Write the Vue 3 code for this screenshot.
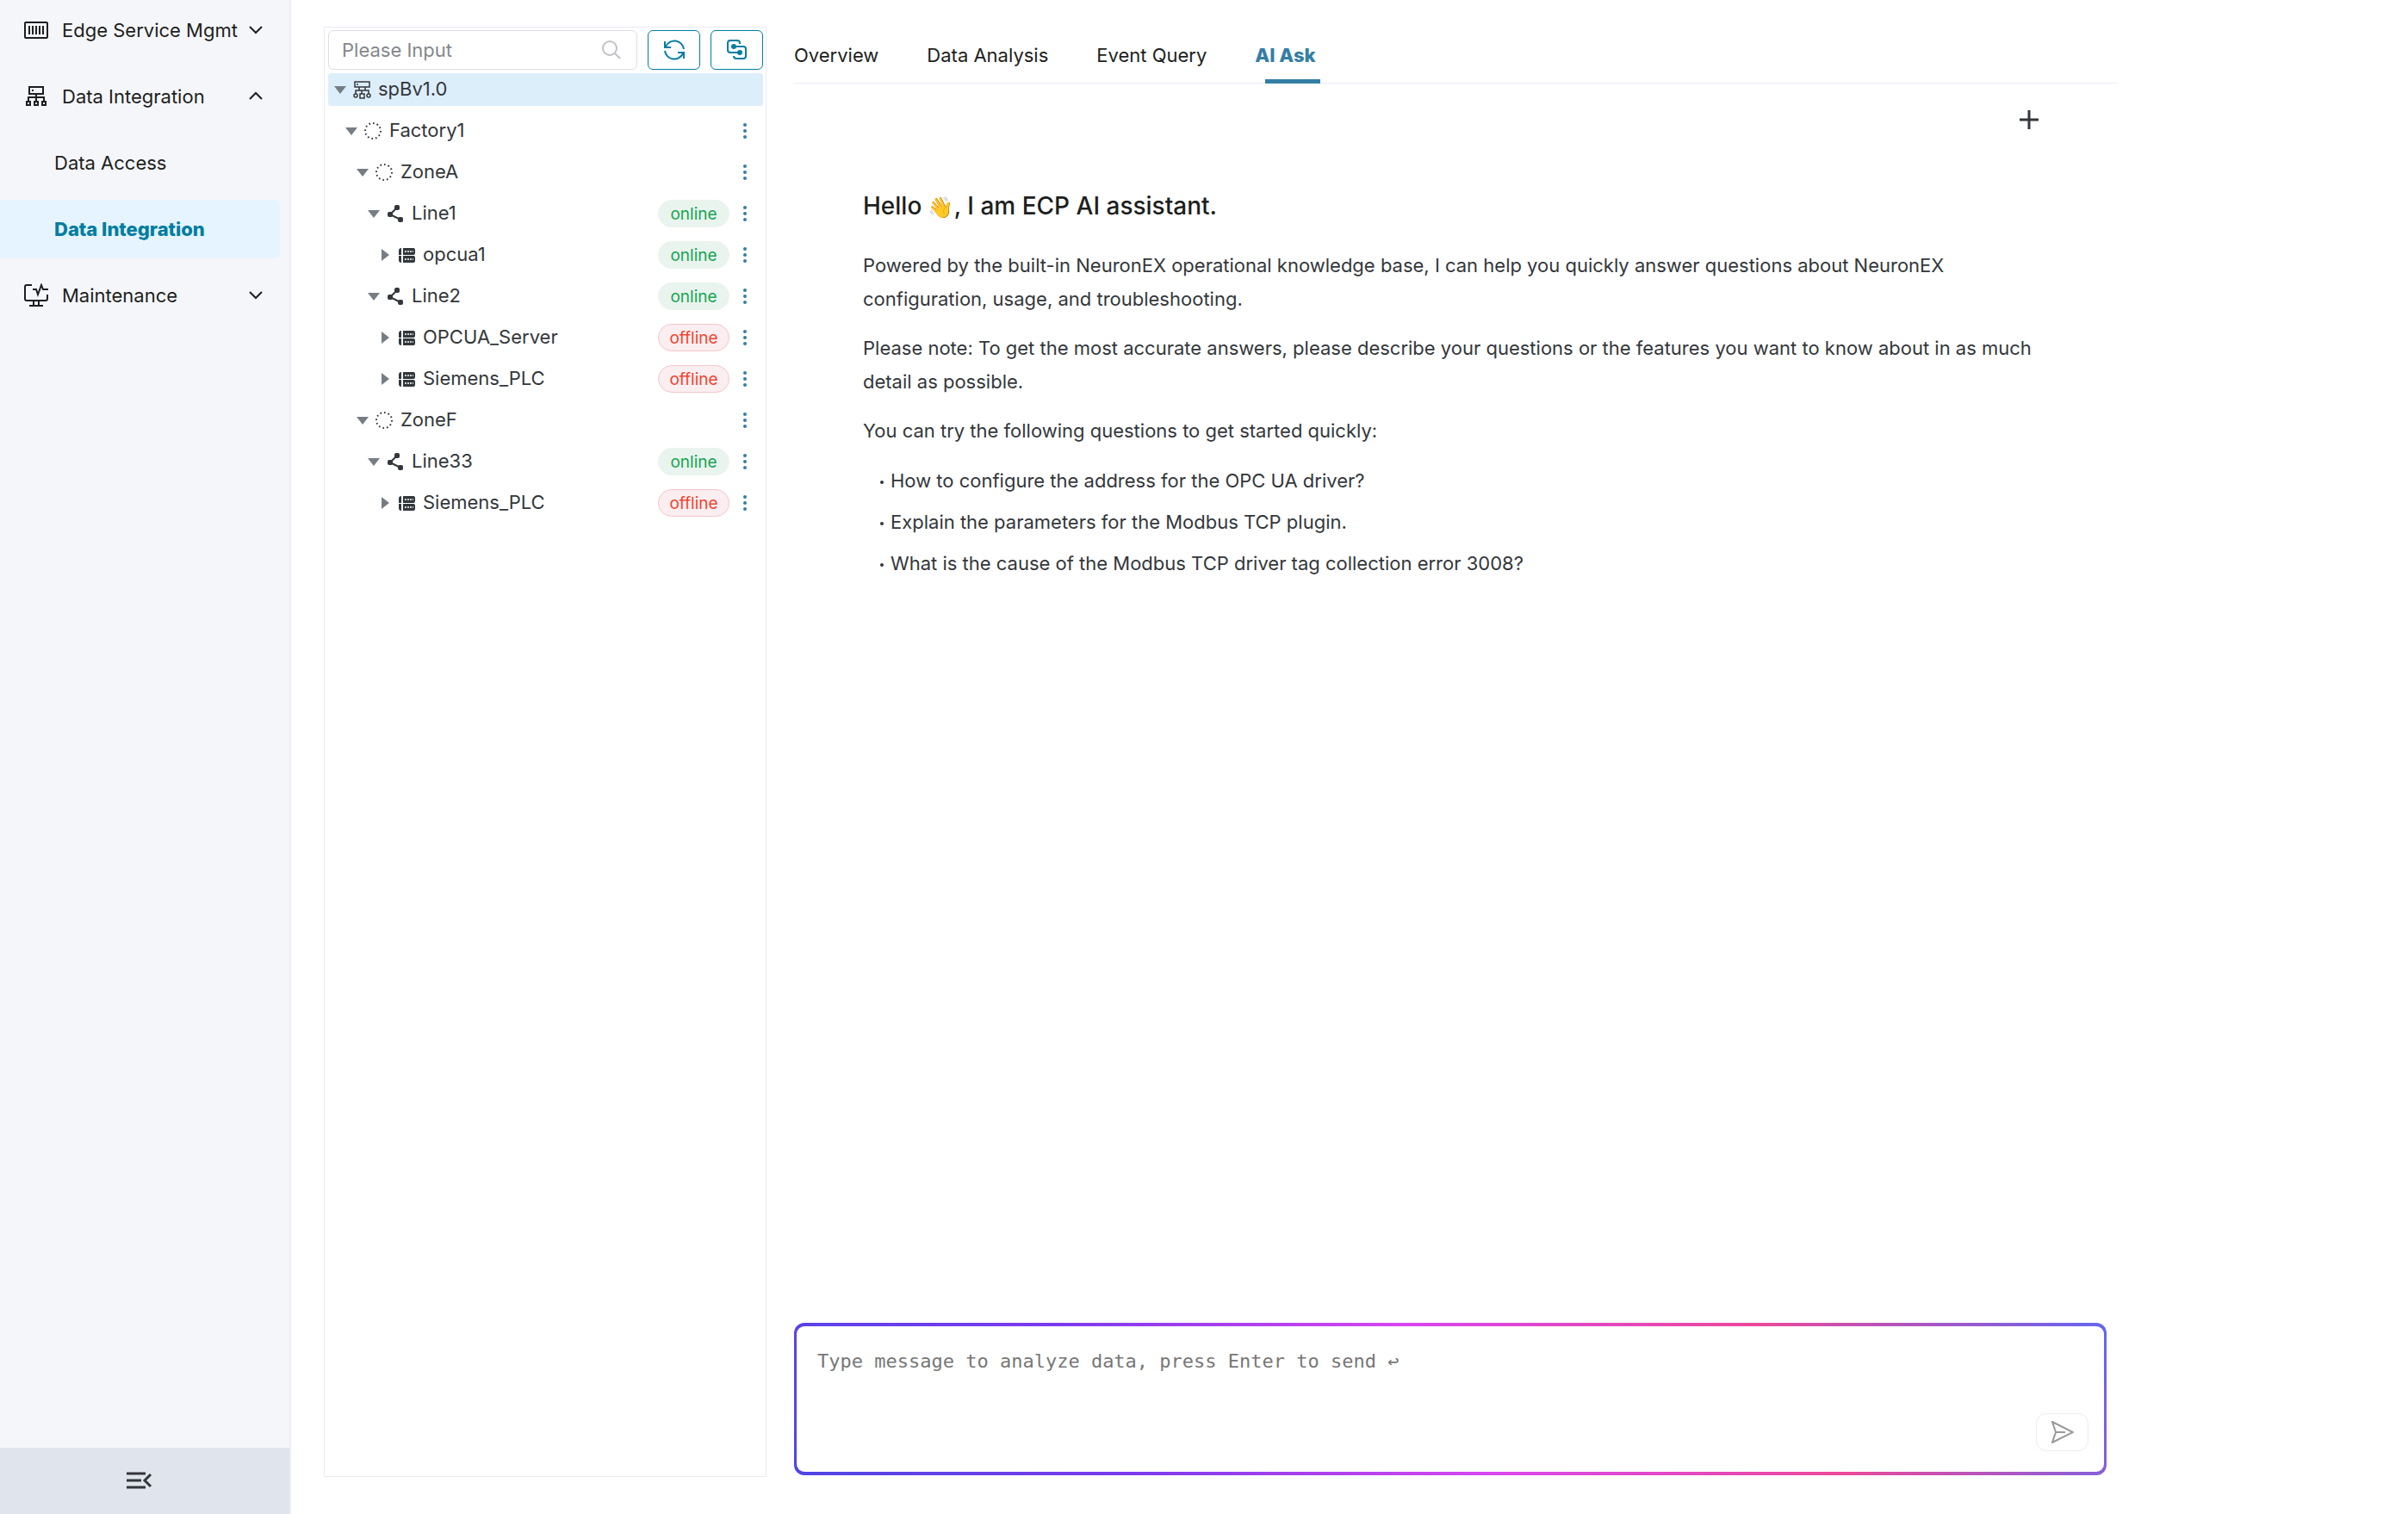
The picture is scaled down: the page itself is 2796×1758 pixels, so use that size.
<template>
  <div class="layout">
    <aside class="sidebar">
      <nav class="menu">
        <button class="menu-item" type="button">
          <svg class="menu-icon" viewBox="0 0 28 28">
            <rect x="1" y="5" width="26" height="18" rx="1" />
            <path d="M6 9v10M10 9v10M14 9v10M18 9v10M22 9v10" />
          </svg>
          <span class="menu-text">Edge Service Mgmt</span>
          <svg class="chevron" viewBox="0 0 18 18"><path d="M2 5l7 7 7-7" /></svg>
        </button>
        <button class="menu-item" type="button">
          <svg class="menu-icon" viewBox="0 0 28 28">
            <path d="M6 3h16v8H6zM14 11v8M5 19v-4h18v4" />
            <path d="M3 20h4v4H3zM12 20h4v4h-4zM21 20h4v4h-4z" />
            <path d="M10 6v2" />
          </svg>
          <span class="menu-text">Data Integration</span>
          <svg class="chevron" viewBox="0 0 18 18"><path d="M2 12l7-7 7 7" /></svg>
        </button>
        <a class="menu-item sub" href="#">Data Access</a>
        <a class="menu-item sub active" href="#">Data Integration</a>
        <button class="menu-item" type="button">
          <svg class="menu-icon" viewBox="0 0 28 28">
            <path d="M9 2H3Q1 2 1 4v14q0 2 2 2h22q2 0 2-2v-5" />
            <path d="M10 7h4l2 6 4-11 2 5h6M11 20v5M17 20v5M6 26h16" />
          </svg>
          <span class="menu-text">Maintenance</span>
          <svg class="chevron" viewBox="0 0 18 18"><path d="M2 5l7 7 7-7" /></svg>
        </button>
      </nav>
      <button class="fold" type="button" aria-label="Fold menu">
        <svg viewBox="0 0 30 24">
          <path d="M0 4h22M0 12h17M0 20h22M28 5l-7 7 7 7" />
        </svg>
      </button>
    </aside>

    <main class="content">
      <section class="tree-panel">
        <div class="tree-header">
          <label class="search">
            <input v-model="keyword" type="text" placeholder="Please Input" aria-label="Search" />
            <svg viewBox="0 0 22 22">
              <circle cx="9" cy="9" r="8" />
              <path d="M15 15l6 6" />
            </svg>
          </label>
          <button class="tool-btn" type="button" aria-label="Refresh">
            <svg viewBox="0 0 24 24">
              <path d="M1 2v7h7M2 8A11 11 0 0 1 23 11M23 22v-7h-7M22 16A11 11 0 0 1 1 13" />
            </svg>
          </button>
          <button class="tool-btn" type="button" aria-label="Batch operation">
            <svg viewBox="0 0 24 24">
              <path d="M15 5V4q0-3-3-3H4Q1 1 1 4v8q0 3 3 3h9M9 8h10q3 0 3 3v8q0 3-3 3h-8q-3 0-3-3" />
              <circle class="dot" cx="8" cy="8" r="3" />
              <circle class="dot" cx="15" cy="15" r="3" />
            </svg>
          </button>
        </div>

        <div class="tree" role="tree">
          <div
            v-for="node in nodes"
            :key="node.id"
            class="tree-node"
            :class="{ current: node.id === currentNode }"
            role="treeitem"
            @click="currentNode = node.id"
          >
            <span class="indent" :style="{ width: node.level * 13 + 'px' }"></span>
            <svg class="arrow" viewBox="0 0 16 16">
              <path v-if="node.open" d="M1 4h14l-7 9z" />
              <path v-else d="M4 1v14l9-7z" />
            </svg>

            <svg v-if="node.type === 'root'" class="node-icon line" viewBox="0 0 22 22">
              <path d="M3 2h17v6H3zM8 8v4M15 8v4M4 16v-4h15v4M11 12v4M9 16h5v5H9z" />
              <circle cx="4" cy="18" r="2" />
              <circle cx="19" cy="18" r="2" />
              <path d="M5 5h2" />
            </svg>
            <svg v-else-if="node.type === 'group'" class="node-icon dotted" viewBox="0 0 22 22">
              <circle cx="11" cy="11" r="9" pathLength="48" />
            </svg>
            <svg v-else-if="node.type === 'node'" class="node-icon share" viewBox="0 0 22 22">
              <path d="M12 5l-7 7 12 6" />
              <rect x="10" y="1" width="6" height="6" rx="2" />
              <rect x="2" y="9" width="6" height="6" rx="2" />
              <rect x="14" y="15" width="6" height="6" rx="2" />
            </svg>
            <svg v-else class="node-icon device" viewBox="0 0 22 22">
              <path d="M5 3v8H2V6q0-3 3-3zM5 12v8q-3 0-3-3v-5z" />
              <path d="M7 3h12q2 0 2 2v4q0 2-2 2H7zM7 12h12q2 0 2 2v4q0 2-2 2H7z" />
              <path class="slots" d="M9 7h10M9 16h10" />
            </svg>

            <span class="node-name">{{ node.name }}</span>
            <span v-if="node.status" class="tag" :class="node.status">{{ node.status }}</span>
            <button v-if="node.level > 0" class="more" type="button" aria-label="More">
              <svg viewBox="0 0 4 18">
                <circle cx="2" cy="2" r="2" />
                <circle cx="2" cy="9" r="2" />
                <circle cx="2" cy="16" r="2" />
              </svg>
            </button>
          </div>
        </div>
      </section>

      <section class="detail">
        <div class="tabs" role="tablist">
          <button
            v-for="tab in tabs"
            :key="tab"
            class="tab"
            :class="{ active: tab === currentTab }"
            type="button"
            role="tab"
            @click="currentTab = tab"
          >
            {{ tab }}
          </button>
        </div>

        <div class="chat">
          <button class="new-chat" type="button" aria-label="New chat">
            <svg viewBox="0 0 22 22"><path d="M11 0v22M0 11h22" /></svg>
          </button>
          <div class="welcome">
            <h2>Hello <span class="wave">👋</span>, I am ECP AI assistant.</h2>
            <p>
              Powered by the built-in NeuronEX operational knowledge base, I can help you quickly answer
              questions about NeuronEX configuration, usage, and troubleshooting.
            </p>
            <p>
              Please note: To get the most accurate answers, please describe your questions or the features
              you want to know about in as much detail as possible.
            </p>
            <p>You can try the following questions to get started quickly:</p>
            <ul>
              <li v-for="question in questions" :key="question">{{ question }}</li>
            </ul>
          </div>
          <div class="composer">
            <div class="composer-inner">
              <textarea
                v-model="message"
                aria-label="Message"
                placeholder="Type message to analyze data, press Enter to send ↩"
              ></textarea>
              <button class="send" type="button" aria-label="Send">
                <svg viewBox="0 0 26 26"><path d="M1 1l24 12L1 25l4-12zM5 13h11" /></svg>
              </button>
            </div>
          </div>
        </div>
      </section>
    </main>
  </div>
</template>

<script setup>
import { ref } from "vue"

const keyword = ref("")
const message = ref("")
const currentNode = ref(1)
const currentTab = ref("AI Ask")

const tabs = ["Overview", "Data Analysis", "Event Query", "AI Ask"]

const nodes = [
  { id: 1, level: 0, type: "root", name: "spBv1.0", open: true },
  { id: 2, level: 1, type: "group", name: "Factory1", open: true },
  { id: 3, level: 2, type: "group", name: "ZoneA", open: true },
  { id: 4, level: 3, type: "node", name: "Line1", open: true, status: "online" },
  { id: 5, level: 4, type: "device", name: "opcua1", status: "online" },
  { id: 6, level: 3, type: "node", name: "Line2", open: true, status: "online" },
  { id: 7, level: 4, type: "device", name: "OPCUA_Server", status: "offline" },
  { id: 8, level: 4, type: "device", name: "Siemens_PLC", status: "offline" },
  { id: 9, level: 2, type: "group", name: "ZoneF", open: true },
  { id: 10, level: 3, type: "node", name: "Line33", open: true, status: "online" },
  { id: 11, level: 4, type: "device", name: "Siemens_PLC", status: "offline" }
]

const questions = [
  "How to configure the address for the OPC UA driver?",
  "Explain the parameters for the Modbus TCP plugin.",
  "What is the cause of the Modbus TCP driver tag collection error 3008?"
]
</script>

<style>
body {
  background-color: #fff;
}
</style>

<style scoped>
.layout {
  display: flex;
  min-height: 100vh;
  font-family: Inter, "Liberation Sans", sans-serif;
  font-size: 22px;
  line-height: 38px;
  color: #33373b;
}

button {
  padding: 0;
  border: none;
  background: none;
  font: inherit;
  color: inherit;
  cursor: pointer;
}

svg {
  flex: none;
  fill: none;
  stroke: currentColor;
  stroke-width: 2;
}

/* sidebar */
.sidebar {
  display: flex;
  flex: none;
  flex-direction: column;
  justify-content: space-between;
  width: 336px;
  border-right: 2px solid #eeeff6;
  background-color: #f5f6fa;
  color: #1d1f21;
}

.menu {
  display: flex;
  flex-direction: column;
  gap: 9px;
  padding: 1px 11px 0 0;
}

.menu-item {
  display: flex;
  align-items: center;
  height: 68px;
  padding: 0 19px 0 28px;
  border-radius: 0 6px 6px 0;
  text-align: left;
  text-decoration: none;
  color: inherit;
}

.menu-item.sub {
  padding-left: 63px;
}

.menu-item.active {
  background-color: #e6f4ff;
  color: #007da1;
  font-weight: 800;
}

.menu-icon {
  width: 28px;
  height: 28px;
  margin-right: 16px;
}

.menu-text {
  flex: 1;
  white-space: nowrap;
}

.chevron {
  width: 18px;
  height: 18px;
}

.fold {
  display: flex;
  align-items: center;
  justify-content: center;
  box-sizing: border-box;
  height: 77px;
  padding: 0 12px 2px 0;
  background-color: #e0e4ec;
  color: #33373b;
}

.fold svg {
  width: 30px;
  height: 24px;
  stroke-width: 3;
}

/* content */
.content {
  display: flex;
  flex: 1;
  gap: 32px;
  min-width: 0;
  padding: 31px 338px 43px 38px;
}

.tree-panel {
  flex: none;
  box-sizing: border-box;
  width: 514px;
  padding: 3px 3px 0 4px;
  border: 1px solid #e9e9f6;
}

.tree-header {
  display: flex;
  gap: 12px;
  margin-bottom: 4px;
}

.search {
  display: flex;
  flex: 1;
  align-items: center;
  box-sizing: border-box;
  min-width: 0;
  height: 46px;
  padding: 0 18px 0 15px;
  border: 1px solid #dcdfe9;
  border-radius: 6px;
  color: #c0c2c6;
}

.search input {
  flex: 1;
  min-width: 0;
  padding: 0;
  border: none;
  outline: none;
  background: none;
  font: inherit;
  color: #33373b;
}

.search input::placeholder {
  color: #85878b;
}

.search svg {
  width: 22px;
  height: 22px;
}

.tool-btn {
  display: flex;
  flex: none;
  align-items: center;
  justify-content: center;
  width: 61px;
  height: 46px;
  border: 1px solid #007da1;
  border-radius: 6px;
  color: #007da1;
}

.tool-btn svg {
  width: 24px;
  height: 24px;
}

.tool-btn .dot {
  fill: currentColor;
  stroke: none;
}

.tree {
  display: flex;
  flex-direction: column;
  gap: 10px;
}

.tree-node {
  display: flex;
  align-items: center;
  height: 38px;
  padding: 0 11px 0 6px;
  border-radius: 3px;
}

.tree-node.current {
  background-color: #ddeefb;
}

.arrow {
  width: 16px;
  height: 16px;
  margin-right: 6px;
  fill: #767d85;
  stroke: none;
}

.node-icon {
  width: 22px;
  height: 22px;
  margin-right: 8px;
}

.node-icon.line {
  stroke-width: 1.5;
}

.node-icon.dotted {
  stroke-dasharray: 1.4 2.6;
}

.node-icon.share rect,
.node-icon.device {
  fill: currentColor;
  stroke: none;
}

.node-icon .slots {
  stroke: #fff;
  stroke-width: 1.4;
  stroke-dasharray: 2 1;
}

.node-name {
  flex: 1;
  line-height: 36px;
  align-self: flex-start;
}

.tag {
  box-sizing: border-box;
  width: 83px;
  height: 32px;
  margin-right: 8px;
  border: 1px solid #e9f4ee;
  border-radius: 16px;
  background-color: #e9f4ee;
  font-size: 19px;
  line-height: 31px;
  text-align: center;
  color: #15a552;
}

.tag.offline {
  border-color: #f6c6cb;
  background-color: #fbeef0;
  color: #f2432f;
}

.more {
  display: flex;
  align-items: center;
  justify-content: center;
  width: 20px;
  height: 32px;
}

.more svg {
  width: 4px;
  height: 18px;
  fill: #347ea5;
  stroke: none;
}

/* detail */
.detail {
  display: flex;
  flex: 1;
  flex-direction: column;
  min-width: 0;
}

.tabs {
  display: flex;
  gap: 56px;
  border-bottom: 1px solid #e9ebf3;
}

.tab {
  position: relative;
  height: 65px;
  color: #1d1f21;
}

.tab.active {
  color: #347ea5;
  font-weight: 800;
}

.tab.active::after {
  content: "";
  position: absolute;
  right: -5px;
  bottom: -1px;
  width: 64px;
  height: 5px;
  background-color: #347ea5;
}

.chat {
  display: flex;
  flex: 1;
  flex-direction: column;
  padding: 31px 12px 2px 0;
}

.new-chat {
  display: flex;
  align-self: flex-end;
  margin-right: 79px;
}

.new-chat svg {
  width: 22px;
  height: 22px;
  stroke-width: 3;
}

.welcome {
  flex: 1;
  padding: 70px 79px 0 80px;
  line-height: 39px;
}

.welcome h2 {
  margin: 0 0 30px;
  font-size: 28px;
  font-weight: 500;
  color: #1d1f21;
}

.wave {
  font-family: "Noto Color Emoji", sans-serif;
  font-size: 24px;
  line-height: 1;
}

.welcome p {
  margin: 0 0 18px;
}

.welcome ul {
  display: flex;
  flex-direction: column;
  gap: 9px;
  margin: 19px 0 0;
  padding: 0 0 0 20px;
  list-style: none;
}

.welcome li::before {
  content: "";
  display: inline-block;
  width: 4px;
  height: 4px;
  margin-right: 8px;
  border-radius: 50%;
  background-color: #33373b;
  vertical-align: middle;
}

.composer {
  padding: 4px 3px;
  border-radius: 12px;
  background: linear-gradient(60deg, #4f46e5, #7c3aed, #d946ef, #ec4899, #6366f1);
}

.composer-inner {
  display: flex;
  align-items: flex-end;
  box-sizing: border-box;
  height: 169px;
  padding: 22px 18px 24px 24px;
  border-radius: 9px;
  background-color: #fff;
}

.composer textarea {
  flex: 1;
  align-self: stretch;
  padding: 0;
  border: none;
  outline: none;
  resize: none;
  background: none;
  font-family: "DejaVu Sans Mono", monospace;
  font-size: 22px;
  line-height: 38px;
  color: #33373b;
}

.composer textarea::placeholder {
  color: #777;
}

.send {
  display: flex;
  align-items: center;
  justify-content: center;
  width: 61px;
  height: 44px;
  border: 1px solid #ececf2;
  border-radius: 12px;
  color: #999;
}

.send svg {
  width: 26px;
  height: 26px;
}
</style>
